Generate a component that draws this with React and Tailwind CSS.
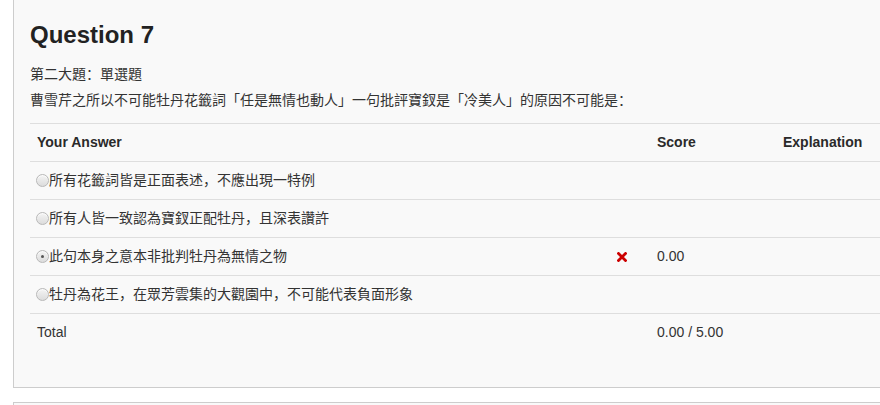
const answers = [
  { text: "所有花籤詞皆是正面表述，不應出現一特例", selected: false },
  { text: "所有人皆一致認為寶釵正配牡丹，且深表讚許", selected: false },
  { text: "此句本身之意本非批判牡丹為無情之物", selected: true, wrong: true, score: "0.00" },
  { text: "牡丹為花王，在眾芳雲集的大觀園中，不可能代表負面形象", selected: false },
];

const Radio = ({ checked }) => (
  <span className="w-[13px] h-[13px] shrink-0 rounded-full border border-[#b8b8b8] bg-gradient-to-b from-[#f4f4f4] to-[#dcdcdc] flex items-center justify-center shadow-[inset_0_1px_1px_rgba(255,255,255,0.8)]">
    {checked && <span className="w-[3px] h-[3px] rounded-full bg-[#555]" />}
  </span>
);

const WrongIcon = () => (
  <svg width="10" height="10" viewBox="0 0 10 10">
    <path d="M1.5 1.5 L8.5 8.5 M8.5 1.5 L1.5 8.5" stroke="#c00" strokeWidth="2.8" strokeLinecap="square" />
  </svg>
);

const App = () => {
  return (
    <div
      className="w-[880px] h-[405px] overflow-hidden bg-white text-[#333] text-[14px]"
      style={{ fontFamily: '"Liberation Sans", "Noto Sans CJK SC", sans-serif' }}
    >
      <div className="pl-[13px]">
        <div className="w-[1000px] bg-[#f9f9f9] border-l border-b border-[#cdcdcd] pl-[16px] pb-[36px]">
          <h2 className="pt-[22px] text-[24px] leading-[26px] font-bold text-[#222]">Question 7</h2>
          <p className="mt-[16px] leading-[20px]">第二大題：單選題</p>
          <p className="mt-[6px] leading-[20px]">
            曹雪芹之所以不可能牡丹花籤詞「任是無情也動人」一句批評寶釵是「冷美人」的原因不可能是：
          </p>

          <div className="mt-[13px]">
            <div className="h-[38px] border-t border-[#dedede] flex items-center font-bold text-[#2a2a2a]">
              <div className="w-[620px] pl-[7px]">Your Answer</div>
              <div className="w-[126px] pl-[7px]">Score</div>
              <div className="pl-[7px]">Explanation</div>
            </div>

            {answers.map((a, idx) => (
              <div key={idx} className="h-[38px] border-t border-[#dedede] flex items-center">
                <div className="w-[620px] pl-[6px] pr-[23px] flex items-center">
                  <Radio checked={a.selected} />
                  <span className="flex-1">{a.text}</span>
                  {a.wrong && <WrongIcon />}
                </div>
                <div className="w-[126px] pl-[7px]">{a.score}</div>
                <div className="pl-[7px]"></div>
              </div>
            ))}

            <div className="h-[38px] border-t border-[#dedede] flex items-center">
              <div className="w-[620px] pl-[7px]">Total</div>
              <div className="w-[126px] pl-[7px]">0.00 / 5.00</div>
              <div className="pl-[7px]"></div>
            </div>
          </div>
        </div>

        <div className="mt-[14px] w-[1000px] h-[40px] border-l border-t border-[#cdcdcd] bg-[#f9f9f9]" />
      </div>
    </div>
  );
};

export default App;
